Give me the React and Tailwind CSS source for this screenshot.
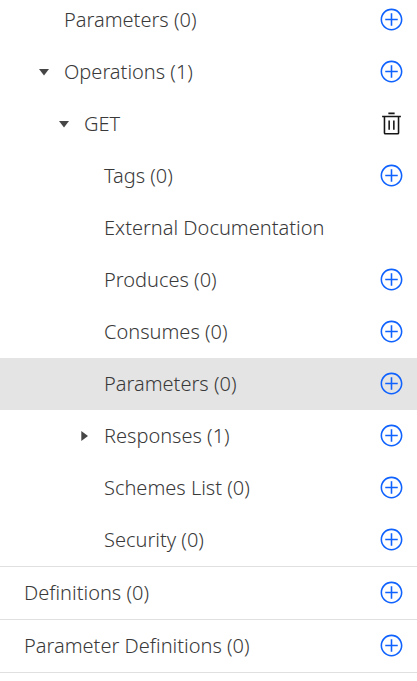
import React from 'react';

const rows = [
  { label: 'Parameters (0)', indent: 'pl-16', action: 'add' },
  { label: 'Operations (1)', indent: 'pl-9', caret: 'down', action: 'add' },
  { label: 'GET', indent: 'pl-14', caret: 'down', action: 'delete' },
  { label: 'Tags (0)', indent: 'pl-26', action: 'add' },
  { label: 'External Documentation', indent: 'pl-26' },
  { label: 'Produces (0)', indent: 'pl-26', action: 'add' },
  { label: 'Consumes (0)', indent: 'pl-26', action: 'add' },
  { label: 'Parameters (0)', indent: 'pl-26', action: 'add', selected: true },
  { label: 'Responses (1)', indent: 'pl-19', caret: 'right', action: 'add' },
  { label: 'Schemes List (0)', indent: 'pl-26', action: 'add' },
  { label: 'Security (0)', indent: 'pl-26', action: 'add' },
];

const sections = ['Definitions (0)', 'Parameter Definitions (0)'];

function AddIcon() {
  return (
    <svg viewBox="0 0 32 32" className="size-[25px] fill-[#0f62fe]" aria-hidden="true">
      <path d="M16,4c6.6,0,12,5.4,12,12s-5.4,12-12,12S4,22.6,4,16S9.4,4,16,4 M16,2C8.3,2,2,8.3,2,16s6.3,14,14,14s14-6.3,14-14S23.7,2,16,2z" />
      <path d="M24 15 17 15 17 8 15 8 15 15 8 15 8 17 15 17 15 24 17 24 17 17 24 17z" />
    </svg>
  );
}

function TrashIcon() {
  return (
    <svg viewBox="0 0 32 32" className="size-[25px] fill-[#161616]" aria-hidden="true">
      <path d="M12 12H14V24H12zM18 12H20V24H18z" />
      <path d="M4 6V8H6V28a2 2 0 0 0 2 2H24a2 2 0 0 0 2-2V8h2V6zM8 28V8H24V28zM12 2H20V4H12z" />
    </svg>
  );
}

function Caret({ direction }) {
  return (
    <svg viewBox="0 0 16 16" className="size-4 fill-[#464646]" aria-hidden="true">
      <path d={direction === 'down' ? 'M3 5H13L8 11.5z' : 'M5.3 3V13L12 8z'} />
    </svg>
  );
}

function Row({ label, indent, caret, action, selected }) {
  return (
    <div className={`flex h-[52px] items-center pr-[13px] ${indent} ${selected ? 'bg-[#e4e4e4]' : ''}`}>
      <button
        type="button"
        aria-expanded={caret ? caret === 'down' : undefined}
        className="flex min-w-0 flex-1 items-center gap-3 text-left whitespace-nowrap"
      >
        {caret && <Caret direction={caret} />}
        <span>{label}</span>
      </button>
      {action && (
        <button
          type="button"
          aria-label={`${action === 'add' ? 'Add to' : 'Delete'} ${label}`}
          className="pb-0.5"
        >
          {action === 'add' ? <AddIcon /> : <TrashIcon />}
        </button>
      )}
    </div>
  );
}

export default function App() {
  return (
    <nav
      aria-label="API outline"
      className="min-h-screen overflow-hidden bg-white font-['Noto_Sans',sans-serif] text-xl leading-6 font-light text-[#393939]"
    >
      <ul className="-mt-1.5 border-b border-[#e0e0e0]">
        {rows.map((row, i) => (
          <li key={i}>
            <Row {...row} />
          </li>
        ))}
      </ul>
      <ul>
        {sections.map((label) => (
          <li key={label} className="border-b border-[#e0e0e0]">
            <Row label={label} indent="pl-6" action="add" />
          </li>
        ))}
      </ul>
    </nav>
  );
}
